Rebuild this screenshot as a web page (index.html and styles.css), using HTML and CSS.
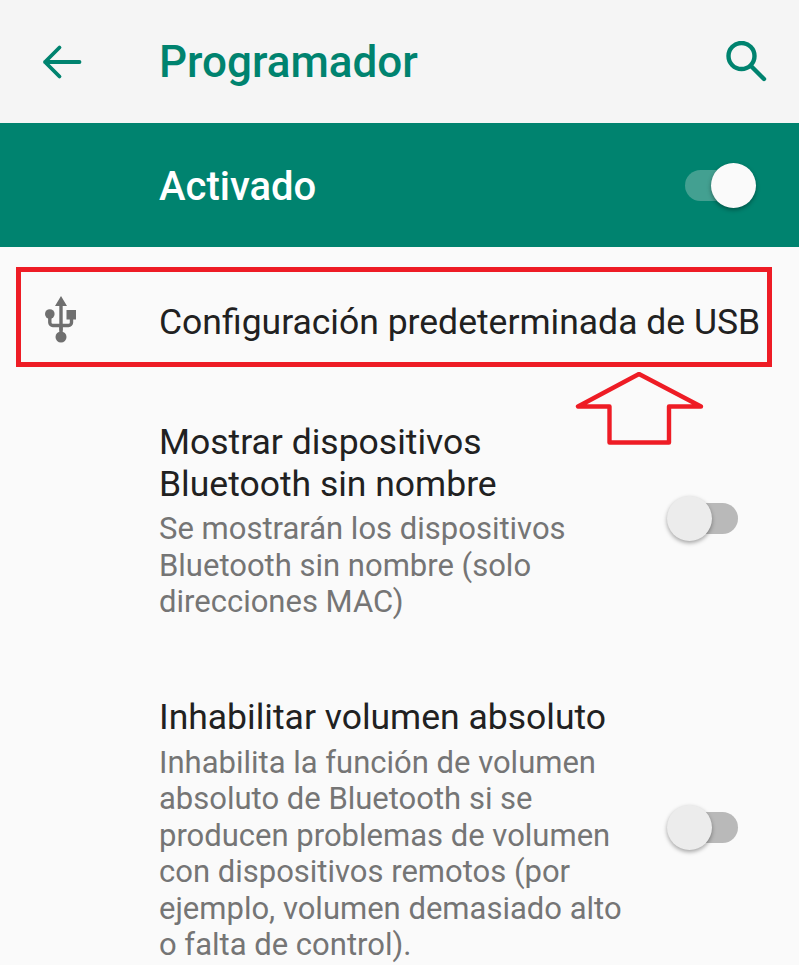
FILE: index.html
```html
<!DOCTYPE html>
<html lang="es">
<head>
  <meta charset="UTF-8" />
  <title>Programador</title>
  <link rel="stylesheet" href="styles.css">
</head>
<body>
  <header class="toolbar">
    <div class="slot">
      <svg class="icon-back" viewBox="0 0 40 36" width="40" height="36">
        <path d="M37.500 18H3M17.500 3.500L3 18l14.500 14.500" fill="none" stroke="#00836f" stroke-width="3.800" stroke-linecap="round" stroke-linejoin="round"/>
      </svg>
    </div>
    <h1 class="title">Programador</h1>
    <svg class="icon-search" viewBox="0 0 42 42" width="42" height="42">
      <circle cx="16.500" cy="15" r="13" fill="none" stroke="#00836f" stroke-width="4.400"/>
      <path d="M26 25L39 38" stroke="#00836f" stroke-width="4.400" stroke-linecap="round"/>
    </svg>
  </header>

  <section class="master">
    <span class="master-label">Activado</span>
    <span class="switch switch-on"><span class="thumb"></span></span>
  </section>

  <main class="list">
    <div class="row-usb">
      <div class="slot-usb">
        <svg viewBox="0 0 34 48" width="34" height="48">
          <path d="M17 0l-6 10h4.300v24.500h3.400V10H23z" fill="#6f6f6f"/>
          <circle cx="5.800" cy="18" r="4.800" fill="#6f6f6f"/>
          <rect x="22.500" y="14" width="9.500" height="9.500" fill="#6f6f6f"/>
          <path d="M5.800 20v6.500a3 3 0 0 0 3 3H17M27.500 22v4.500a3 3 0 0 1-3 3H17" fill="none" stroke="#6f6f6f" stroke-width="3.400"/>
          <circle cx="17" cy="41" r="5.500" fill="#6f6f6f"/>
          <rect x="15.300" y="30" width="3.400" height="8" fill="#6f6f6f"/>
        </svg>
      </div>
      <span class="item-title usb-title">Configuración predeterminada de USB</span>
    </div>

    <div class="item item-first">
      <div class="item-text">
        <div class="item-title">Mostrar dispositivos<br>Bluetooth sin nombre</div>
        <div class="item-sub">Se mostrarán los dispositivos<br>Bluetooth sin nombre (solo<br>direcciones MAC)</div>
      </div>
      <span class="switch switch-off"><span class="thumb"></span></span>
    </div>

    <div class="item item-second">
      <div class="item-text">
        <div class="item-title">Inhabilitar volumen absoluto</div>
        <div class="item-sub item-sub-long">Inhabilita la función de volumen<br>absoluto de Bluetooth si se<br>producen problemas de volumen<br>con dispositivos remotos (por<br>ejemplo, volumen demasiado alto<br>o falta de control).</div>
      </div>
      <span class="switch switch-off"><span class="thumb"></span></span>
    </div>
  </main>

  <!-- flecha roja encima de la captura -->
  <svg class="arrow" viewBox="0 0 132 74" width="132" height="74">
    <path d="M65 2L4 34.500H35.500V70.500H95V34.500H127z" fill="none" stroke="#ee1c25" stroke-width="4.400" stroke-linejoin="round"/>
  </svg>
</body>
</html>
```

FILE: styles.css
```css
html, body {
  margin: 0;
  padding: 0;
}

body {
  position: relative;
  height: 965px;
  overflow: hidden;
  background-color: #fafafa;
  font-family: Roboto, "Liberation Sans", sans-serif;
  color: #212121;
}

.toolbar {
  display: flex;
  align-items: center;
  height: 123px;
  background-color: #f5f5f5;
  color: #00836f;
}

.slot {
  display: flex;
  width: 159px;
  padding-left: 42px;
  box-sizing: border-box;
}

.title {
  flex: 1;
  margin: 0;
  font-size: 44px;
  font-weight: 500;
}

.icon-search {
  margin-right: 32px;
}

.master {
  display: flex;
  align-items: center;
  justify-content: space-between;
  height: 124px;
  padding-left: 159px;
  padding-right: 44px;
  background-color: #00836f;
  color: #fff;
}

.master-label {
  padding-top: 3px;
  font-size: 40px;
  font-weight: 500;
}

.switch {
  display: flex;
  align-items: center;
  width: 70px;
  height: 31px;
  border-radius: 16px;
}

.switch-on {
  justify-content: flex-end;
  background-color: #43a091;
}

.switch-off {
  flex: none;
  margin-bottom: 4px;
  background-color: #b9b9b9;
}

.thumb {
  display: block;
  width: 45px;
  height: 45px;
  border-radius: 50%;
  background-color: #fafafa;
  box-shadow: 0 2px 4px rgba(0, 0, 0, 0.35);
}

.switch-on .thumb {
  margin-right: -1px;
}

.switch-off .thumb {
  margin-left: -1px;
  background-color: #ececec;
}

.list {
  padding-top: 20px;
}

.row-usb {
  display: flex;
  align-items: center;
  height: 100px;
  width: 756px;
  margin-left: 16px;
  box-sizing: border-box;
  border: 5px solid #ee1c25;
}

.slot-usb {
  display: flex;
  width: 138px;
  padding-left: 23px;
  padding-top: 6px;
  box-sizing: border-box;
}

.item-title {
  font-size: 35.500px;
  line-height: 42px;
  white-space: nowrap;
}

.usb-title {
  padding-top: 10px;
}

.item {
  display: flex;
  align-items: center;
  justify-content: space-between;
  padding-left: 159px;
  padding-right: 61px;
}

.item-first {
  margin-top: 54px;
}

.item-second {
  margin-top: 75px;
}

.item-sub {
  margin-top: 6px;
  font-size: 31px;
  line-height: 36.500px;
  color: #757575;
  white-space: nowrap;
}

.item-sub-long {
  margin-top: 7px;
}

.arrow {
  position: absolute;
  left: 574px;
  top: 372px;
}
```
